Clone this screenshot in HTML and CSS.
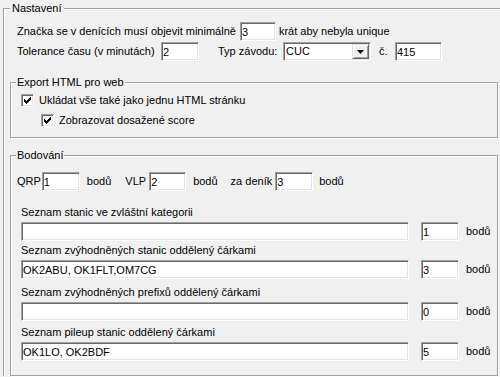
FILE: index.html
```html
<!DOCTYPE html>
<html>
	<head>
		<meta charset="UTF-8">
		<title>Nastavení</title>
		<link rel="stylesheet" href="styles.css">
	</head>
	<body>
		<fieldset class="group group-main">
			<legend>Nastavení</legend>
			<div class="row row-first">
				<span>Značka se v denících musí objevit minimálně</span>
				<input class="edit edit-min" type="text" value="3">
				<span class="after-min">krát aby nebyla unique</span>
			</div>
			<div class="row row-second">
				<span class="lbl-tol">Tolerance času (v minutách)</span>
				<input class="edit edit-tol" type="text" value="2">
				<span class="lbl-typ">Typ závodu:</span>
				<div class="combo">
					<span class="combo-text">CUC</span>
					<span class="combo-btn">
						<svg width="7" height="4" viewBox="0 0 7 4"><path d="M0 0h7L3.5 4z" fill="#000"/></svg>
					</span>
				</div>
				<span class="lbl-c">č.</span>
				<input class="edit edit-num" type="text" value="415">
			</div>

			<fieldset class="group group-inner group-export">
				<legend>Export HTML pro web</legend>
				<label class="check-row">
					<span class="check"><svg width="11" height="11" viewBox="1 1 11 11"><path d="M3 5h1v3H3zM4 6h1v3H4zM5 7h1v3H5zM6 6h1v3H6zM7 5h1v3H7zM8 4h1v3H8zM9 3h1v3H9z" fill="#000"/></svg></span>
					<span>Ukládat vše také jako jednu HTML stránku</span>
				</label>
				<label class="check-row check-sub">
					<span class="check"><svg width="11" height="11" viewBox="1 1 11 11"><path d="M3 5h1v3H3zM4 6h1v3H4zM5 7h1v3H5zM6 6h1v3H6zM7 5h1v3H7zM8 4h1v3H8zM9 3h1v3H9z" fill="#000"/></svg></span>
					<span>Zobrazovat dosažené score</span>
				</label>
			</fieldset>

			<fieldset class="group group-inner group-score">
				<legend>Bodování</legend>
				<div class="row row-points">
					<span>QRP</span>
					<input class="edit edit-pt edit-qrp" type="text" value="1">
					<span class="unit">bodů</span>
					<span class="lbl-vlp">VLP</span>
					<input class="edit edit-pt edit-vlp" type="text" value="2">
					<span class="unit">bodů</span>
					<span class="lbl-den">za deník</span>
					<input class="edit edit-pt edit-den" type="text" value="3">
					<span class="unit unit-den">bodů</span>
				</div>

				<div class="list">
					<div class="item">
						<div class="item-label">Seznam stanic ve zvláštní kategorii</div>
						<div class="item-row">
							<input class="edit edit-long" type="text" value="">
							<input class="edit edit-small" type="text" value="1">
							<span class="unit-small">bodů</span>
						</div>
					</div>
					<div class="item item-2">
						<div class="item-label">Seznam zvýhodněných stanic oddělený čárkami</div>
						<div class="item-row">
							<input class="edit edit-long" type="text" value="OK2ABU, OK1FLT,OM7CG">
							<input class="edit edit-small" type="text" value="3">
							<span class="unit-small">bodů</span>
						</div>
					</div>
					<div class="item item-3">
						<div class="item-label">Seznam zvýhodněných prefixů oddělený čárkami</div>
						<div class="item-row">
							<input class="edit edit-long" type="text" value="">
							<input class="edit edit-small" type="text" value="0">
							<span class="unit-small">bodů</span>
						</div>
					</div>
					<div class="item">
						<div class="item-label">Seznam pileup stanic oddělený čárkami</div>
						<div class="item-row">
							<input class="edit edit-long" type="text" value="OK1LO, OK2BDF">
							<input class="edit edit-small" type="text" value="5">
							<span class="unit-small">bodů</span>
						</div>
					</div>
				</div>
			</fieldset>
		</fieldset>
	</body>
</html>
```

FILE: styles.css
```css
* {
	box-sizing: border-box;
}
html, body {
	margin: 0;
	padding: 0;
	width: 500px;
	height: 377px;
	overflow: hidden;
	background: #f0f0f0;
}
body {
	font-family: "Liberation Sans", Arial, sans-serif;
	font-size: 11px;
	line-height: 13px;
	color: #000;
	padding-top: 2px;
}

/* group boxes */
.group {
	margin: 0;
	border: 1px solid #a0a0a0;
	box-shadow: inset 1px 1px #fff, 1px 1px #fff;
	min-width: 0;
}
.group legend {
	line-height: 13px;
	background: #f0f0f0;
}
/* the outer box runs on past the window, so no right or bottom edge */
.group-main {
	margin-left: 3px;
	width: 497px;
	padding: 0 0 0 6px;
	border-right: 0;
	border-bottom: 0;
	box-shadow: inset 1px 1px #fff;
}
.group-main > legend {
	padding: 0 2px;
}
.group-inner {
	width: 488px;
	padding: 0 0 0 5px;
}
.group-inner > legend {
	padding: 0 1px;
}

/* rows of the first group */
.row {
	display: flex;
	align-items: center;
	height: 19px;
	white-space: nowrap;
}
.row-first {
	margin-top: 7px;
	padding-left: 7px;
}
.row-second {
	margin-top: 1px;
	padding-left: 7px;
}
.edit {
	height: 19px;
	margin: 0;
	padding: 0 1px;
	font: inherit;
	color: #000;
	background: #fff;
	border: 1px solid;
	border-color: #a0a0a0 #fff #fff #a0a0a0;
	box-shadow: inset 1px 1px #696969, inset -1px -1px #e3e3e3;
	outline: none;
	border-radius: 0;
}
.edit-min {
	width: 36px;
	margin-left: 4px;
}
.after-min {
	margin-left: 3px;
}
.lbl-tol {
	width: 144px;
}
.edit-tol {
	width: 38px;
}
.lbl-typ {
	width: 65px;
	margin-left: 19px;
}
.combo {
	display: flex;
	align-items: stretch;
	width: 88px;
	height: 19px;
	padding: 1px;
	background: #fff;
	border: 1px solid;
	border-color: #a0a0a0 #fff #fff #a0a0a0;
	box-shadow: inset 1px 1px #696969, inset -1px -1px #e3e3e3;
}
.combo-text {
	flex: 1;
	padding-left: 1px;
	line-height: 15px;
}
.combo-btn {
	width: 17px;
	display: flex;
	align-items: center;
	justify-content: center;
	background: #f0f0f0;
	border: 1px solid;
	border-color: #e3e3e3 #696969 #696969 #e3e3e3;
	box-shadow: inset 1px 1px #fff, inset -1px -1px #a0a0a0;
}
.lbl-c {
	width: 16px;
	margin-left: 8px;
}
.edit-num {
	width: 47px;
}

/* export */
.group-export {
	margin-top: 15px;
	padding-top: 1px;
	padding-bottom: 7px;
}
.check-row {
	display: flex;
	align-items: center;
	height: 20px;
	padding-left: 5px;
}
.check-sub {
	padding-left: 25px;
}
.check {
	width: 13px;
	height: 13px;
	margin-right: 5px;
	background: #fff;
	border: 1px solid;
	border-color: #a0a0a0 #fff #fff #a0a0a0;
	box-shadow: inset 1px 1px #696969, inset -1px -1px #e3e3e3;
}
.check svg {
	display: block;
}

/* scoring */
.group-score {
	margin-top: 11px;
	padding-top: 10px;
	padding-bottom: 14px;
}
.row-points {
	padding-left: 1px;
}
.edit-pt {
	width: 38px;
}
.edit-qrp {
	margin-left: 1px;
}
.unit {
	margin-left: 7px;
}
.lbl-vlp {
	margin-left: 14px;
}
.edit-vlp {
	width: 37px;
	margin-left: 3px;
}
.lbl-den {
	margin-left: 13px;
}
.edit-den {
	margin-left: 3px;
}
.unit-den {
	margin-left: 6px;
}
.list {
	margin-top: 15px;
	padding-left: 5px;
}
.item + .item {
	margin-top: 5px;
}
.item-2 {
	margin-top: 3px !important;
}
.item-3 {
	margin-top: 7px !important;
}
.item-label {
	height: 13px;
	margin-bottom: 3px;
	white-space: nowrap;
}
.item-row {
	display: flex;
	align-items: center;
}
.edit-long {
	width: 388px;
}
.edit-small {
	width: 38px;
	margin-left: 12px;
}
.unit-small {
	margin-left: 7px;
}
```
